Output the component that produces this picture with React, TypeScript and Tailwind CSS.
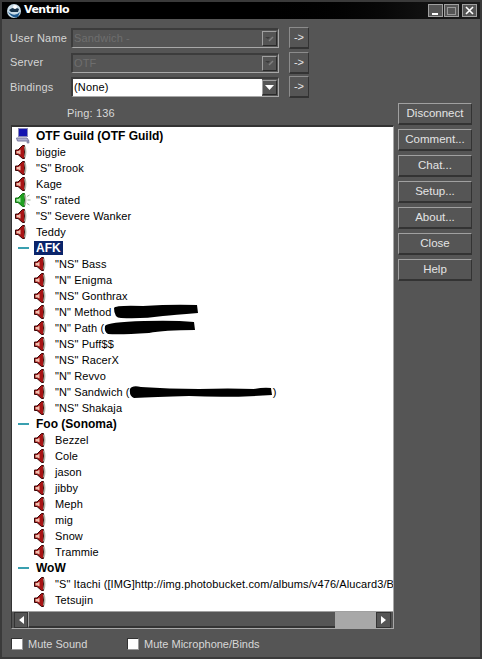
import React from "react";

const F = { fontFamily: '"Liberation Sans", Arial, sans-serif' };

function Speaker({ green }: { green?: boolean }) {
  const fill = green ? "#20a020" : "#a81414";
  return (
    <svg width="16" height="16" viewBox="0 0 16 16" className="shrink-0">
      <path d="M0.5 6 H3 L7.5 1.5 H9.5 V14.5 H7.5 L3 10.5 H0.5 Z" fill={fill} stroke={green ? "#127012" : "#3a0808"} strokeWidth="1" />
      <path d="M1.5 7 H3.5 L5.5 5.5 V10.5 L3.5 9.5 H1.5 Z" fill={green ? "#a8e8a8" : "#f0c0b0"} />
      <path d="M9.8 2.5 Q11.6 8 9.8 13.5" fill="none" stroke="#b4b4a8" strokeWidth="1.5" />
      {green && <path d="M12 4.5 L14.5 3 M12.5 8 H15.5 M12 11.5 L14.5 13" stroke="#98b098" strokeWidth="1" />}
    </svg>
  );
}

function Computer() {
  return (
    <svg width="16" height="16" viewBox="0 0 16 16" className="shrink-0">
      <rect x="3.5" y="0.5" width="9" height="8" fill="#1414b0" stroke="#8888b8" />
      <path d="M1.5 10 H12 L14 13 H2.5 Z" fill="#b0b0d0" stroke="#7878a0" />
      <circle cx="13" cy="14" r="1.5" fill="#8888a8" />
    </svg>
  );
}

function Blob({ d, w, gap = 0 }: { d: string; w: number; gap?: number }) {
  return (
    <svg width={w} height="16" viewBox={`0 0 ${w} 16`} className="absolute top-0 left-full" style={{ marginLeft: gap }}>
      <path d={d} fill="#000" />
    </svg>
  );
}

function UserRow({ name, indent, green, blob, after }: { name: string; indent?: boolean; green?: boolean; blob?: React.ReactNode; after?: number }) {
  return (
    <div className={`flex items-center h-4 whitespace-nowrap ${indent ? "pl-[22px]" : "pl-[3px]"}`}>
      <Speaker green={green} />
      <span className="relative ml-[5px] text-black text-[11px] tracking-[0.1px]">
        {name}
        {blob}
      </span>
      {after ? <span className="text-black text-[11px]" style={{ marginLeft: after }}>)</span> : null}
    </div>
  );
}

function Channel({ name, selected, icon }: { name: string; selected?: boolean; icon?: boolean }) {
  return (
    <div className="flex items-center h-4 whitespace-nowrap pl-[3px]">
      {icon ? <Computer /> : <span className="w-4 shrink-0 flex justify-center"><span className="block w-[11px] h-[2px] bg-[#3aa0b0]" /></span>}
      <span className={`ml-[3px] text-[12px] leading-[14px] font-bold px-[2px] ${selected ? "bg-[#0a246a] text-white" : "text-black"}`}>{name}</span>
    </div>
  );
}

function Combo({ value, active }: { value: string; active?: boolean }) {
  return (
    <div className="flex items-center gap-[10px] h-[22px]">
      <div className="w-[208px] h-[20px] flex items-center justify-between border-t-2 border-l-2 border-t-[#3c3c3c] border-l-[#3c3c3c] border-b border-r border-b-[#a8a8a8] border-r-[#a8a8a8] bg-[#555555]">
        <span className={`flex-1 h-full flex items-center pl-[1px] text-[11px] tracking-[0.15px] ${active ? "bg-white text-black" : "text-[#6e6e6e]"}`}>{value}</span>
        <span className="w-[15px] h-[15px] mr-[1px] flex items-center justify-center bg-[#555555] border-t border-l border-t-[#a0a0a0] border-l-[#a0a0a0] border-b border-r border-b-[#2a2a2a] border-r-[#2a2a2a]">
          {active ? (
            <svg width="9" height="5" viewBox="0 0 9 5"><path d="M0 0 H9 L4.5 5 Z" fill="#fff" /></svg>
          ) : (
            <svg width="9" height="6" viewBox="0 0 9 6"><path d="M0 1 H5 L3 3 Z" fill="#3a3a3a" /><path d="M4 5 L8 1" stroke="#808080" strokeWidth="1.5" /></svg>
          )}
        </span>
      </div>
      <div className="w-[20px] h-[22px] flex items-center justify-center text-[11px] text-[#e8e8e8] border-t border-l border-t-[#8c8c8c] border-l-[#8c8c8c] border-b-2 border-r border-b-[#333] border-r-[#333]">
        -&gt;
      </div>
    </div>
  );
}

function SideButton({ label }: { label: string }) {
  return (
    <div className="w-[74px] h-[22px] flex items-center justify-center text-[11.5px] text-[#e4e4e4] border-t border-l border-t-[#a0a0a0] border-l-[#a0a0a0] border-b-2 border-r border-b-[#333] border-r-[#333]">
      {label}
    </div>
  );
}

function Check({ label, className }: { label: string; className?: string }) {
  return (
    <div className={`flex items-center ${className ?? ""}`}>
      <span className="w-[12px] h-[12px] bg-white border-t border-l border-t-[#333] border-l-[#333] border-b border-r border-b-[#999] border-r-[#999]" />
      <span className="ml-[5px] text-[11px] text-[#d8d8d8]">{label}</span>
    </div>
  );
}

export default function App() {
  const labels = ["User Name", "Server", "Bindings"];
  return (
    <div style={F} className="w-[482px] h-[659px] bg-[#555555] border-2 border-[#3a3a3a] overflow-hidden flex flex-col">
      <div className="h-[17px] shrink-0 bg-gradient-to-r from-black via-black to-[#1c1c1c] flex items-center pl-[4px] pr-[3px]">
        <svg width="16" height="16" viewBox="0 0 16 16">
          <circle cx="8" cy="8" r="7" fill="#c8dce8" />
          <path d="M1.5 8 Q8 15 14 9 L12 14 Q6 16 1.5 8Z" fill="#1e5a90" />
          <path d="M3 7 Q8 3 13 6 L12 9 H5 Z" fill="#16324a" />
          <circle cx="9" cy="4" r="2" fill="#fff" />
        </svg>
        <span className="ml-[2px] text-[11px] tracking-[-0.5px] font-bold text-white" style={{ fontFamily: '"DejaVu Sans", sans-serif' }}>Ventrilo</span>
        <div className="ml-auto flex gap-[1px]">
          <span className="w-[15px] h-[13px] bg-[#555] border border-[#a0a0a0] flex items-end justify-start pl-[3px] pb-[1px]"><span className="block w-[6px] h-[2px] bg-white" /></span>
          <span className="w-[15px] h-[13px] bg-[#555] border border-[#a0a0a0] flex items-center justify-center"><span className="block w-[9px] h-[8px] border border-[#999]" /></span>
          <span className="ml-[2px] w-[15px] h-[13px] bg-[#555] border border-[#a0a0a0] flex items-center justify-center">
            <svg width="9" height="9" viewBox="0 0 9 9"><path d="M1 1 L8 8 M8 1 L1 8" stroke="#fff" strokeWidth="1.6" /></svg>
          </span>
        </div>
      </div>

      <div className="flex-1 flex min-h-0">
        <div className="w-[392px] shrink-0 pl-[8px] flex flex-col">
          <div className="flex pt-[8px]">
            <div className="w-[61px] flex flex-col gap-[2.5px] text-[11px] tracking-[0.15px] text-[#d4d4d4]">
              {labels.map((l) => (
                <div key={l} className="h-[22px] flex items-center">{l}</div>
              ))}
            </div>
            <div className="flex flex-col gap-[2.5px]">
              <Combo value="Sandwich -" />
              <Combo value="OTF" />
              <Combo value="(None)" active />
            </div>
          </div>
          <div className="h-[23px] flex items-end pl-[57px] text-[11px] tracking-[0.15px] text-[#d8d8d8]">Ping: 136</div>
          <div className="ml-[1px] mt-[4px] h-[504px] w-[383px] border-t-2 border-l border-t-[#333] border-l-[#333] border-r border-b border-r-[#a8a8a8] border-b-[#a8a8a8] bg-white flex flex-col">
            <div className="flex-1 min-h-0 overflow-hidden pt-[1px]">
              <Channel name="OTF Guild (OTF Guild)" icon />
              <UserRow name="biggie" />
              <UserRow name={'"S" Brook'} />
              <UserRow name="Kage" />
              <UserRow name={'"S" rated'} green />
              <UserRow name={'"S" Severe Wanker'} />
              <UserRow name="Teddy" />
              <Channel name="AFK" selected />
              <UserRow indent name={'"NS" Bass'} />
              <UserRow indent name={'"N" Enigma'} />
              <UserRow indent name={'"NS" Gonthrax'} />
              <UserRow indent name={'"N" Method'} blob={<Blob w={86} gap={1} d="M1 4 Q2 1 30 2 Q60 0 84 1 L85 9 Q60 11 50 12 Q30 15 8 14 Q1 14 1 4 Z" />} />
              <UserRow indent name={'"N" Path ('} blob={<Blob w={92} d="M1 6 Q3 2 40 1 Q70 0 90 2 L91 10 Q60 10 45 13 Q15 15 4 14 Q0 12 1 6 Z" />} />
              <UserRow indent name={'"NS" Puff$$'} />
              <UserRow indent name={'"NS" RacerX'} />
              <UserRow indent name={'"N" Revvo'} />
              <UserRow indent name={'"N" Sandwich ('} after={143} blob={<Blob w={143} gap={-1} d="M1 5 Q3 1 12 3 Q40 5 70 5 Q100 4 125 5 Q135 3 142 4 L143 11 Q100 14 60 12 Q25 13 5 14 Q0 12 1 5 Z" />} />
              <UserRow indent name={'"NS" Shakaja'} />
              <Channel name="Foo (Sonoma)" />
              {["Bezzel", "Cole", "jason", "jibby", "Meph", "mig", "Snow", "Trammie"].map((n) => (
                <UserRow key={n} indent name={n} />
              ))}
              <Channel name="WoW" />
              <UserRow indent name={'"S" Itachi ([IMG]http://img.photobucket.com/albums/v476/Alucard3/B'} />
              <UserRow indent name="Tetsujin" />
            </div>
            <div className="h-[17px] shrink-0 flex bg-[#555] border-t border-t-[#a0a0a0]">
              <span className="ml-[2px] w-[14px] flex items-center justify-center border border-[#333]">
                <svg width="5" height="8" viewBox="0 0 5 8"><path d="M5 0 V8 L0 4 Z" fill="#fff" /></svg>
              </span>
              <span className="flex-1 border-l border-l-[#a0a0a0] border-b-2 border-b-[#333]" />
              <span className="w-[41px] bg-[#a8a8a8]" />
              <span className="w-[15px] mr-[2px] flex items-center justify-center border border-[#333]">
                <svg width="5" height="8" viewBox="0 0 5 8"><path d="M0 0 V8 L5 4 Z" fill="#fff" /></svg>
              </span>
            </div>
          </div>
          <div className="mt-[7px] ml-[1px] flex">
            <Check label="Mute Sound" className="w-[116px]" />
            <Check label="Mute Microphone/Binds" />
          </div>
        </div>
        <div className="pl-[4px] pt-[84px] flex flex-col gap-[4px]">
          {["Disconnect", "Comment...", "Chat...", "Setup...", "About...", "Close", "Help"].map((l) => (
            <SideButton key={l} label={l} />
          ))}
        </div>
      </div>
    </div>
  );
}
